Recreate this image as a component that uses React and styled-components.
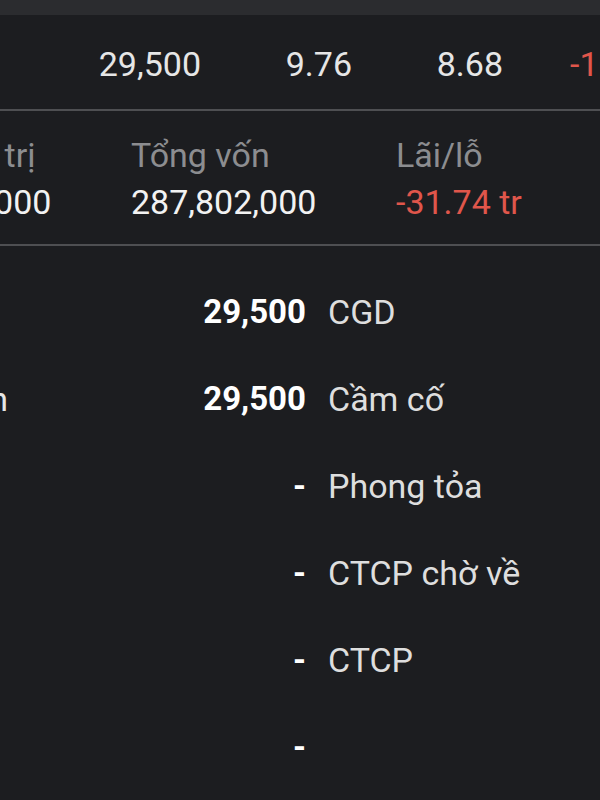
import React from 'react';
import styled, { createGlobalStyle } from 'styled-components';

const GlobalStyle = createGlobalStyle`
  html, body {
    margin: 0;
    padding: 0;
    background: #1c1d20;
  }
  body {
    font-family: Roboto, "Liberation Sans", sans-serif;
    overflow: hidden;
  }
`;

const Screen = styled.div`
  width: 600px;
  height: 800px;
  overflow: hidden;
  background: #1c1d20;
  display: flex;
  flex-direction: column;
`;

const TopStrip = styled.div`
  height: 15px;
  background: #2b2c2f;
  flex-shrink: 0;
`;

const PriceRow = styled.div`
  height: 96px;
  flex-shrink: 0;
  display: flex;
  align-items: center;
  border-bottom: 2px solid #4e4f52;
  font-size: 34px;
  color: #e6e6e6;
  white-space: nowrap;
  padding-top: 3px;
  box-sizing: border-box;
`;

const PriceCell = styled.div`
  flex: 0 0 ${p => p.w}px;
  text-align: ${p => (p.left ? 'left' : 'right')};
  padding-left: ${p => p.pad || 0}px;
  color: ${p => (p.red ? '#e0564b' : 'inherit')};
  box-sizing: border-box;
`;

const Summary = styled.div`
  height: 135px;
  flex-shrink: 0;
  box-sizing: border-box;
  display: flex;
  align-items: center;
  margin-left: -134px;
  border-bottom: 2px solid #4e4f52;
  white-space: nowrap;
`;

const SummaryCol = styled.div`
  flex: 0 0 265px;
  display: flex;
  flex-direction: column;
  gap: 3px;
  font-size: 34px;
  padding-top: 2px;
`;

const Label = styled.div`
  color: #8c8d90;
  line-height: 44px;
`;

const Value = styled.div`
  color: ${p => (p.red ? '#e0564b' : '#f2f2f2')};
  line-height: 44px;
`;

const Details = styled.div`
  padding-top: 22px;
  display: flex;
  flex-direction: column;
`;

const DetailRow = styled.div`
  height: 87px;
  display: grid;
  grid-template-columns: 300px 298px auto;
  margin-left: -292px;
  align-items: center;
  font-size: 34px;
  white-space: nowrap;
`;

const Side = styled.div`
  text-align: right;
  color: #e6e6e6;
`;

const Amount = styled.div`
  text-align: right;
  font-weight: 700;
  font-size: 33px;
  color: #ffffff;
`;

const Kind = styled.div`
  padding-left: 22px;
  color: #dedede;
`;

const details = [
  { side: '', amount: '29,500', kind: 'CGD' },
  { side: 'Giá bình quân', amount: '29,500', kind: 'Cầm cố' },
  { side: '', amount: '-', kind: 'Phong tỏa' },
  { side: '', amount: '-', kind: 'CTCP chờ về' },
  { side: '', amount: '-', kind: 'CTCP' },
  { side: '', amount: '-', kind: '' },
];

export default function App() {
  return (
    <Screen>
      <GlobalStyle />
      <TopStrip />
      <PriceRow>
        <PriceCell w={201}>29,500</PriceCell>
        <PriceCell w={151}>9.76</PriceCell>
        <PriceCell w={151}>8.68</PriceCell>
        <PriceCell w={160} left pad={67} red>-10.97%</PriceCell>
      </PriceRow>
      <Summary>
        <SummaryCol>
          <Label>Tổng giá trị</Label>
          <Value>256,062,000</Value>
        </SummaryCol>
        <SummaryCol>
          <Label>Tổng vốn</Label>
          <Value>287,802,000</Value>
        </SummaryCol>
        <SummaryCol>
          <Label>Lãi/lỗ</Label>
          <Value red>-31.74 tr</Value>
        </SummaryCol>
      </Summary>
      <Details>
        {details.map((d, i) => (
          <DetailRow key={i}>
            <Side>{d.side}</Side>
            <Amount>{d.amount}</Amount>
            <Kind>{d.kind}</Kind>
          </DetailRow>
        ))}
      </Details>
    </Screen>
  );
}
